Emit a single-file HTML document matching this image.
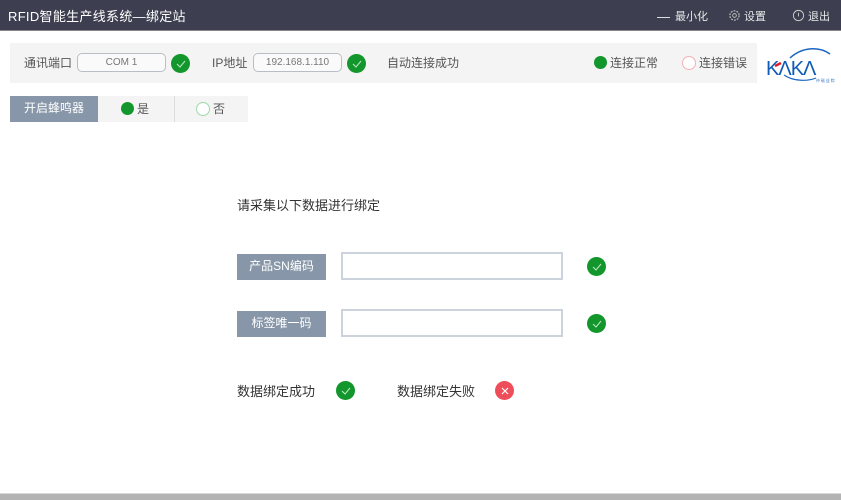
<!DOCTYPE html>
<html><head><meta charset="utf-8"><style>
*{margin:0;padding:0;box-sizing:border-box}
body{width:841px;height:500px;background:#fff;position:relative;overflow:hidden;font-family:"Liberation Sans","Noto Sans CJK SC",sans-serif;color:#444}
.abs{position:absolute}
.hdr{left:0;top:0;width:841px;height:31px;background:#3d3f50;border-bottom:1px solid #888}
.hdr .t{left:8px;top:6px;color:#fff;font-size:13px;letter-spacing:0.3px}
.hdr .m{color:#e8e8e8;font-size:11px;top:8px}
.ok{width:19px;height:19px;border-radius:50%;background:#13962c;display:flex;align-items:center;justify-content:center}
.bar{left:10px;top:43px;width:747px;height:40px;background:#f4f4f4}
.fld{height:19px;border:1px solid #b9bec6;border-radius:5px;background:#fafafa;font-size:10px;color:#777;text-align:center;line-height:17px}
.lbl{font-size:12px;color:#555}
.gl{background:#8796a8;color:#fff;font-size:12px;text-align:center}
.inp{border:2px solid #cdd3dc;background:#fff}
</style></head><body>
<div class="abs hdr">
<div class="abs t">RFID智能生产线系统—绑定站</div>
<div class="abs m" style="left:657px"><span style="display:inline-block;width:13px;border-top:1px solid #ddd;vertical-align:middle;margin-right:5px"></span>最小化</div>
<div class="abs m" style="left:728px">
<svg width="13" height="13" viewBox="0 0 14 14" style="vertical-align:-2px;margin-right:3px"><circle cx="7" cy="7" r="5" fill="none" stroke="#bbb" stroke-width="1.3" stroke-dasharray="2 1.2"/><circle cx="7" cy="7" r="2" fill="none" stroke="#bbb"/></svg>设置</div>
<div class="abs m" style="left:792px">
<svg width="13" height="13" viewBox="0 0 14 14" style="vertical-align:-2px;margin-right:3px"><circle cx="7" cy="7" r="5.5" fill="none" stroke="#ccc"/><path d="M7 4v4" stroke="#ccc"/></svg>退出</div>
</div>

<div class="abs bar"></div>
<div class="abs lbl" style="left:24px;top:54px">通讯端口</div>
<div class="abs fld" style="left:77px;top:53px;width:89px">COM 1</div>
<div class="abs ok" style="left:171px;top:54px"><svg width="10" height="8" viewBox="0 0 10 8"><path d="M1 4l3 3 5-6" fill="none" stroke="#bfe8c6" stroke-width="1"/></svg></div>
<div class="abs lbl" style="left:212px;top:54px">IP地址</div>
<div class="abs fld" style="left:253px;top:53px;width:89px">192.168.1.110</div>
<div class="abs ok" style="left:347px;top:54px"><svg width="10" height="8" viewBox="0 0 10 8"><path d="M1 4l3 3 5-6" fill="none" stroke="#bfe8c6" stroke-width="1"/></svg></div>
<div class="abs lbl" style="left:387px;top:54px">自动连接成功</div>
<div class="abs" style="left:594px;top:56px;width:13px;height:13px;border-radius:50%;background:#13962c"></div>
<div class="abs lbl" style="left:610px;top:54px">连接正常</div>
<div class="abs" style="left:682px;top:56px;width:14px;height:14px;border-radius:50%;border:1px solid #f2b0b8;background:#fff"></div>
<div class="abs lbl" style="left:699px;top:54px">连接错误</div>

<svg class="abs" style="left:764px;top:44px" width="77" height="40" viewBox="0 0 77 40">
<path d="M26 14 C38 3 55 2 66 10" fill="none" stroke="#1a66c0" stroke-width="1.5"/>
<path d="M20 31 C30 38 45 37 52 34" fill="none" stroke="#1a66c0" stroke-width="1.2"/>
<text x="2" y="31" font-family="Liberation Sans" font-size="20" fill="#0f5bb5" letter-spacing="-1">KΛKΛ</text>
<path d="M11 22l6-3" stroke="#e0202a" stroke-width="2.5"/>
<text x="52" y="38" font-size="4" fill="#4a82c8" font-family="Noto Sans CJK SC">仲 磁 益 粽</text>
</svg>

<div class="abs gl" style="left:10px;top:96px;width:88px;height:26px;line-height:25px">开启蜂鸣器</div>
<div class="abs" style="left:98px;top:96px;width:150px;height:26px;background:#f4f4f4"></div>
<div class="abs" style="left:174px;top:96px;width:1px;height:26px;background:#dcdcdc"></div>
<div class="abs" style="left:121px;top:102px;width:13px;height:13px;border-radius:50%;background:#13962c"></div>
<div class="abs lbl" style="left:137px;top:100px">是</div>
<div class="abs" style="left:196px;top:102px;width:14px;height:14px;border-radius:50%;border:1px solid #9fd8a8;background:#fff"></div>
<div class="abs lbl" style="left:213px;top:100px">否</div>

<div class="abs" style="left:237px;top:195px;font-size:13px;color:#333">请采集以下数据进行绑定</div>

<div class="abs gl" style="left:237px;top:254px;width:89px;height:26px;line-height:25px">产品SN编码</div>
<div class="abs inp" style="left:341px;top:252px;width:222px;height:28px"></div>
<div class="abs ok" style="left:587px;top:257px"><svg width="10" height="8" viewBox="0 0 10 8"><path d="M1 4l3 3 5-6" fill="none" stroke="#bfe8c6" stroke-width="1"/></svg></div>

<div class="abs gl" style="left:237px;top:311px;width:89px;height:26px;line-height:25px">标签唯一码</div>
<div class="abs inp" style="left:341px;top:309px;width:222px;height:28px"></div>
<div class="abs ok" style="left:587px;top:314px"><svg width="10" height="8" viewBox="0 0 10 8"><path d="M1 4l3 3 5-6" fill="none" stroke="#bfe8c6" stroke-width="1"/></svg></div>

<div class="abs" style="left:237px;top:381px;font-size:13px;color:#333">数据绑定成功</div>
<div class="abs ok" style="left:336px;top:381px"><svg width="10" height="8" viewBox="0 0 10 8"><path d="M1 4l3 3 5-6" fill="none" stroke="#bfe8c6" stroke-width="1"/></svg></div>
<div class="abs" style="left:397px;top:381px;font-size:13px;color:#333">数据绑定失败</div>
<div class="abs ok" style="left:495px;top:381px;background:#ee4e5a"><svg width="8" height="8" viewBox="0 0 8 8"><path d="M1 1l6 6M7 1l-6 6" stroke="#fff" stroke-width="1.2"/></svg></div>

<div class="abs" style="left:0;top:493px;width:841px;height:1px;background:#d8d8d8"></div>
<div class="abs" style="left:0;top:494px;width:841px;height:6px;background:#b3b3b3"></div>
</body></html>
